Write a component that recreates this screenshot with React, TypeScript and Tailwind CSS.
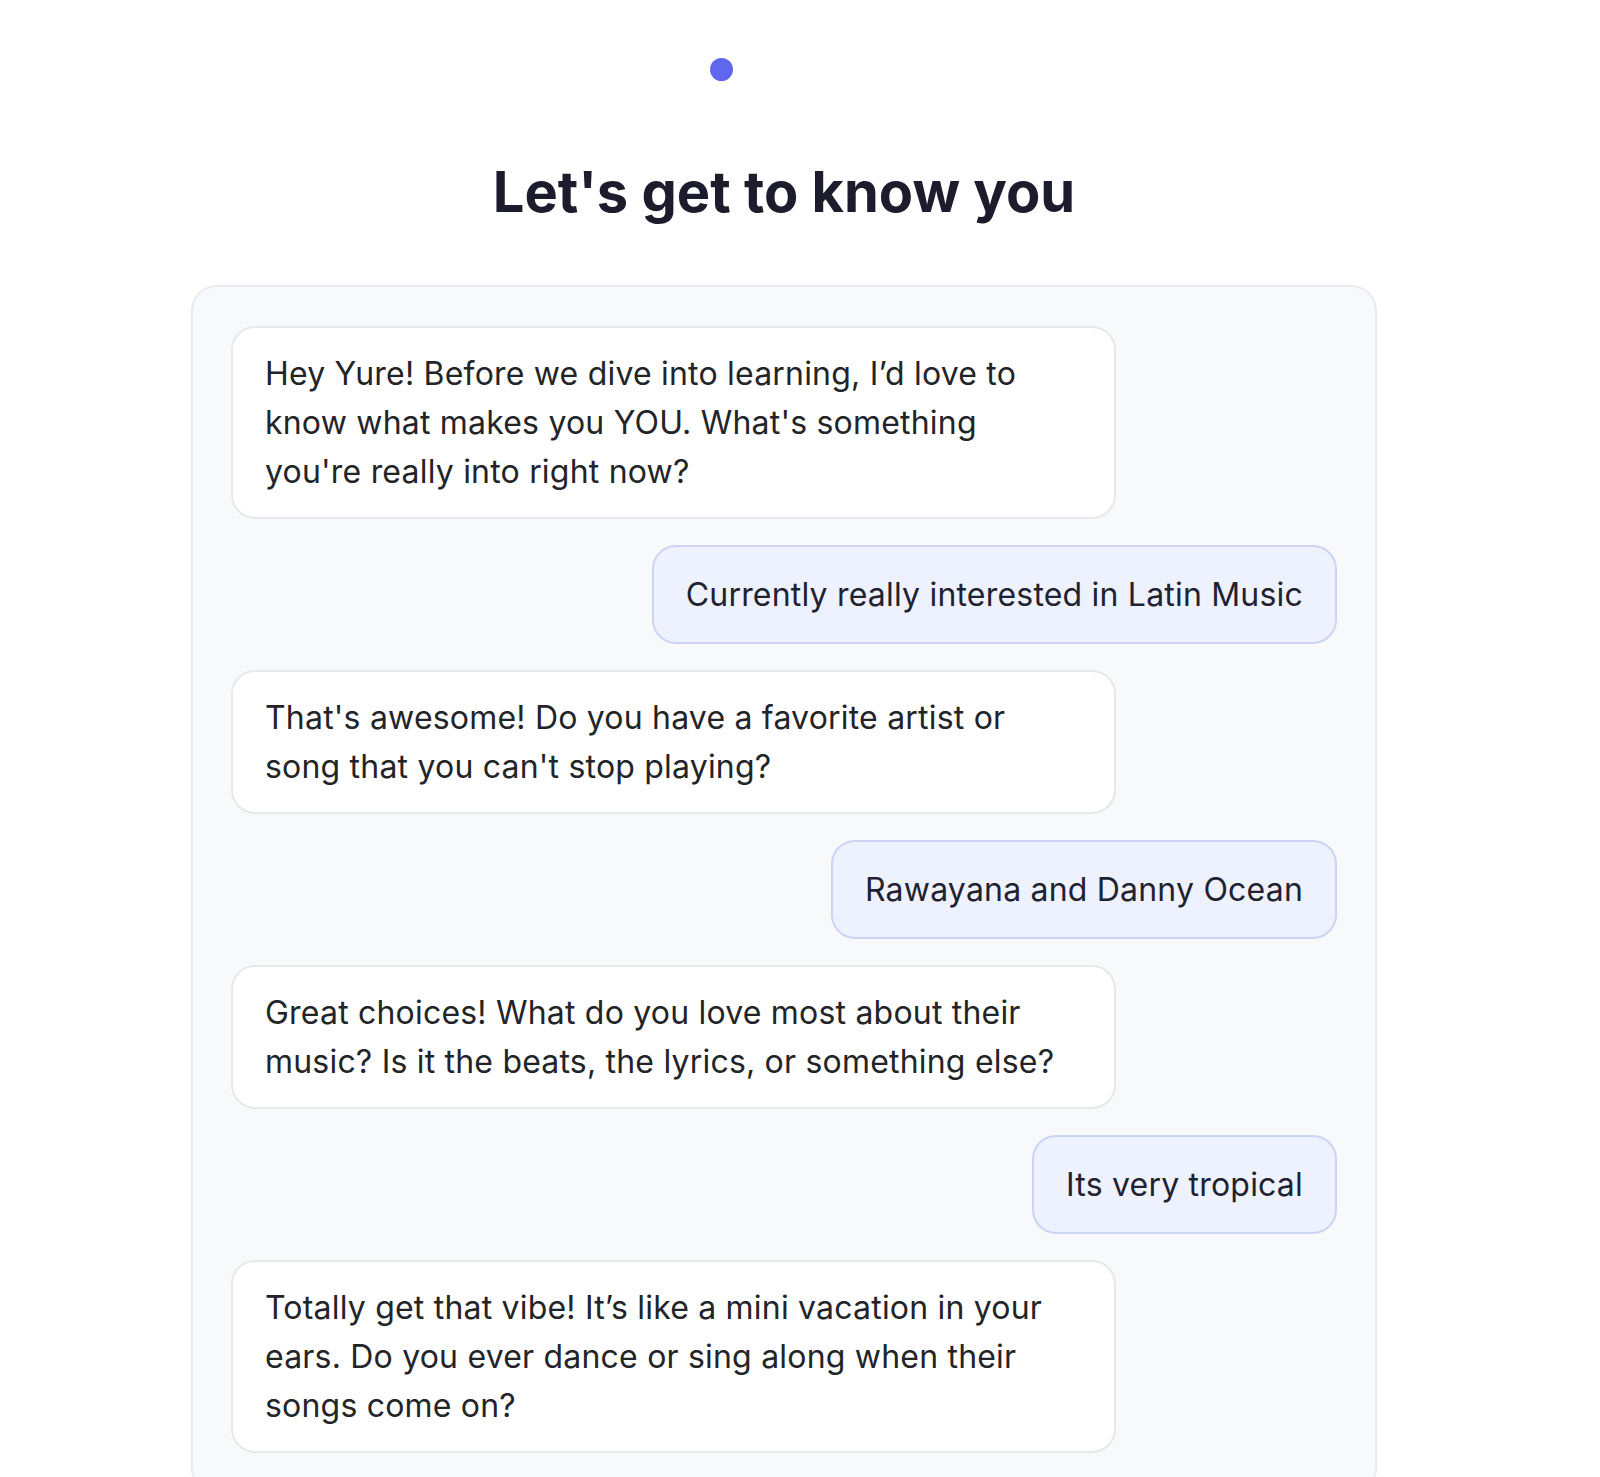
type Message = {
    id: number;
    from: "bot" | "user";
    text: string;
};

const messages: Message[] = [
    { id: 1, from: "bot", text: "Hey Yure! Before we dive into learning, I’d love to know what makes you YOU. What's something you're really into right now?" },
    { id: 2, from: "user", text: "Currently really interested in Latin Music" },
    { id: 3, from: "bot", text: "That's awesome! Do you have a favorite artist or song that you can't stop playing?" },
    { id: 4, from: "user", text: "Rawayana and Danny Ocean" },
    { id: 5, from: "bot", text: "Great choices! What do you love most about their music? Is it the beats, the lyrics, or something else?" },
    { id: 6, from: "user", text: "Its very tropical" },
    { id: 7, from: "bot", text: "Totally get that vibe! It’s like a mini vacation in your ears. Do you ever dance or sing along when their songs come on?" },
];

function Bubble({ message }: { message: Message }) {
    if (message.from === "user") {
        return (
            <div className="self-end w-fit rounded-[24px] border-2 border-[#cdd4f3] bg-[#eef1fe] px-[32px] py-[23px] text-[32px] leading-[49px] tracking-[0.2px] text-[#1f2230]">
                {message.text}
            </div>
        );
    }
    return (
        <div className="self-start w-[80%] rounded-[24px] border-2 border-[#e6e8ec] bg-white px-[32px] py-[21px] text-[32px] leading-[49px] tracking-[0.2px] text-[#232428]">
            {message.text}
        </div>
    );
}

export default function App() {
    return (
        <div className="w-[1568px] min-h-screen bg-white font-['Inter','Noto_Sans',sans-serif]">
            {/* typing dot */}
            <div className="pt-[58px] pl-[710px]">
                <div className="w-[23px] h-[23px] rounded-full bg-[#6067ee]"></div>
            </div>

            {/* title */}
            <h1 className="mt-[83px] text-center text-[56px] leading-none font-bold text-[#1c1c2d]">Let's get to know you</h1>

            {/* chat card */}
            <div className="mx-auto mt-[65px] w-[1186px] rounded-[26px] border-2 border-[#e8eaef] bg-[#f8f9fb] px-[38px] pt-[39px] pb-[39px]">
                <div className="flex flex-col gap-[26px]">
                    {messages.map((m) => (
                        <Bubble key={m.id} message={m} />
                    ))}
                </div>
            </div>
        </div>
    );
}
